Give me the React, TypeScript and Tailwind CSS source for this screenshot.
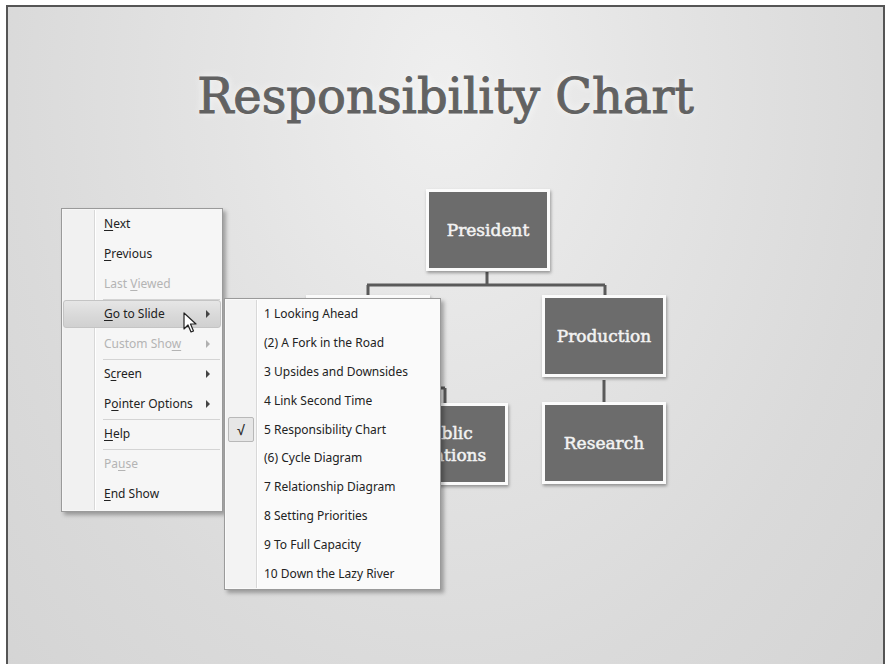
import React from 'react';

type Item = { label: React.ReactNode; sep?: boolean; disabled?: boolean; sub?: boolean; hot?: boolean };

const u = (s: string) => <span className="underline underline-offset-2">{s}</span>;

const mainItems: Item[] = [
  { label: <>{u('N')}ext</> },
  { label: <>{u('P')}revious</> },
  { label: <>Last {u('V')}iewed</>, disabled: true },
  { label: <>{u('G')}o to Slide</>, sep: true, sub: true, hot: true },
  { label: <>Custom Sho{u('w')}</>, disabled: true, sub: true },
  { label: <>S{u('c')}reen</>, sep: true, sub: true },
  { label: <>P{u('o')}inter Options</>, sub: true },
  { label: <>{u('H')}elp</>, sep: true },
  { label: <>Pa{u('u')}se</>, sep: true, disabled: true },
  { label: <>{u('E')}nd Show</> },
];

const slides = [
  '1 Looking Ahead',
  '(2) A Fork in the Road',
  '3 Upsides and Downsides',
  '4 Link Second Time',
  '5 Responsibility Chart',
  '(6) Cycle Diagram',
  '7 Relationship Diagram',
  '8 Setting Priorities',
  '9 To Full Capacity',
  '10 Down the Lazy River',
];

const boxes = [
  { x: 426, y: 189, label: 'President' },
  { x: 306, y: 295, label: '' },
  { x: 542, y: 295, label: 'Production' },
  { x: 230, y: 403, label: '' },
  { x: 384, y: 403, label: 'Public Relations' },
  { x: 542, y: 402, label: 'Research' },
];

function MainMenu() {
  return (
    <div className="absolute left-[61px] top-[208px] w-[162px] pb-[2px] bg-[#f6f6f6] border border-[#9a9a9a] shadow-[3px_3px_4px_rgba(0,0,0,0.3)]">
      <div className="absolute left-[1px] top-[1px] bottom-[1px] w-[32px] bg-[#f1f1f1] border-r border-[#d8d8d8] shadow-[1px_0_0_#ffffff]" />
      {mainItems.map((it, i) => (
        <div key={i} className="relative flex flex-col h-[30px]">
          <div className={`ml-[41px] mr-[2px] h-px ${it.sep ? 'bg-[#d4d4d4]' : ''}`} />
          <div
            className={`flex-1 mx-[1px] mb-[1px] flex items-center pl-[40px] pr-[10px] rounded-[3px] ${
              it.hot ? 'bg-gradient-to-b from-[#e6e6e6] via-[#dadada] to-[#d0d0d0] border border-[#c4c4c4]' : 'border border-transparent'
            } ${it.disabled ? 'text-[#b4b4b4]' : 'text-[#222]'}`}
          >
            <span>{it.label}</span>
            {it.sub && (
              <span
                className={`ml-auto w-0 h-0 border-y-[4px] border-y-transparent border-l-[4px] ${
                  it.disabled ? 'border-l-[#b0b0b0]' : 'border-l-[#444]'
                }`}
              />
            )}
          </div>
        </div>
      ))}
    </div>
  );
}

function SlideMenu() {
  return (
    <div className="absolute left-[224px] top-[298px] w-[217px] py-[1px] bg-[#fafafa] border border-[#9a9a9a] shadow-[3px_3px_4px_rgba(0,0,0,0.3)]">
      <div className="absolute left-[1px] top-[1px] bottom-[1px] w-[31px] bg-[#f3f3f3] border-r border-[#d8d8d8] shadow-[1px_0_0_#ffffff]" />
      {slides.map((s, i) => (
        <div key={s} className="relative flex items-center h-[28.8px] text-[#222]">
          <div className="w-[32px] flex justify-center">
            {i === 4 && (
              <div className="w-[26px] h-[25px] flex items-center justify-center bg-[#e6e6e6] border border-[#b8b8b8] rounded-[2px] text-[14px] font-bold text-[#333]">
                √
              </div>
            )}
          </div>
          <span className="ml-[7px]">{s}</span>
        </div>
      ))}
    </div>
  );
}

function OrgChart() {
  return (
    <>
      <svg className="absolute left-0 top-0" width="886" height="664">
        <g stroke="#5a5a5a" strokeWidth="3" fill="none">
          <path d="M487 272 V285 M367 285 H605 M368 285 V296 M605 285 V296" />
          <path d="M368 380 V388 M291 388 H445 M291 388 V404 M445 388 V404" />
          <path d="M604 380 V403" />
        </g>
      </svg>
      {boxes.map((b, i) => (
        <div
          key={i}
          className="absolute w-[124px] h-[82px] bg-[#6c6c6c] border-[3px] border-[#fbfbfb] shadow-[1px_2px_3px_rgba(0,0,0,0.35)] flex items-center justify-center text-center text-[#f3f3f3] text-[17px] leading-[22px] px-[8px] font-['DejaVu_Serif',serif] [-webkit-text-stroke:0.5px_#f3f3f3]"
          style={{ left: b.x, top: b.y }}
        >
          {b.label}
        </div>
      ))}
    </>
  );
}

function Cursor() {
  return (
    <svg className="absolute left-[183px] top-[312px]" width="14" height="22" viewBox="0 0 14 22">
      <path d="M1 1 V17 L5 13 L8 20 L10.5 19 L7.5 12 H13 Z" fill="#fff" stroke="#222" strokeWidth="1.2" strokeLinejoin="round" />
    </svg>
  );
}

export default function App() {
  return (
    <div className="relative w-[886px] h-[664px] overflow-hidden bg-white pl-[6px] pt-[5px] pr-[1px] font-['Noto_Sans',sans-serif] text-[12px]">
      <div className="h-[700px] border-l-2 border-t-2 border-r-2 border-[#555] bg-[radial-gradient(ellipse_at_50%_12%,#efefef_0%,#e4e4e4_35%,#dadada_70%,#d4d4d4_100%)]">
        <h1 className="pt-[62px] text-center text-[48px] leading-[54px] text-[#626262] font-['DejaVu_Serif',serif] [-webkit-text-stroke:1px_#626262] [text-shadow:0_0_10px_#ffffff]">
          Responsibility Chart
        </h1>
      </div>
      <OrgChart />
      <MainMenu />
      <SlideMenu />
      <Cursor />
    </div>
  );
}
